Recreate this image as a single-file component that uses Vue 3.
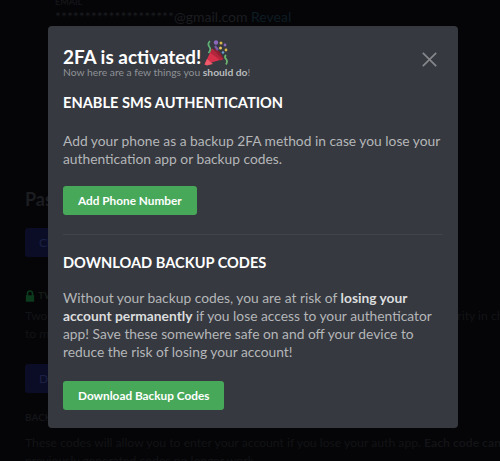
<script setup>
const sections = {
  sms: 'Add your phone as a backup 2FA method in case you lose your authentication app or backup codes.'
}
</script>

<template>
  <div class="page">
    <div class="backdrop">
      <div class="email-block">
        <div class="label">EMAIL</div>
        <div class="email"><span class="stars">********************</span>@gmail.com <span class="reveal">Reveal</span></div>
      </div>
      <h2 class="pw-title">Password and Authentication</h2>
      <div class="bg-btn first">Change Password</div>
      <div class="tfa"><svg class="lock" viewBox="0 0 12 14" width="10" height="12"><path d="M2 6V4a4 4 0 0 1 8 0v2h1v8H1V6zm2 0h4V4a2 2 0 0 0-4 0z" fill="#0c3a1d"/></svg>TWO-FACTOR AUTH ENABLED</div>
      <p class="bg-text tw">Two-factor authentication is enabled on your account, keeping your account security in check</p>
      <p class="bg-text">to make sure nobody else gets in.</p>
      <div class="bg-btn second">Download</div>
      <div class="backup">BACKUP CODES</div>
      <p class="bg-text codes">These codes will allow you to enter your account if you lose your auth app. <b>Each code can only</b></p>
      <p class="bg-text">previously generated codes no longer work.</p>
    </div>

    <div class="modal" role="dialog">
      <header class="head">
        <div>
          <div class="title"><span>2FA is activated!</span>
            <svg class="popper" viewBox="0 0 25 26" width="25" height="26">
              <path d="M0.5 24.5 L8 8.5 L19.5 19 Z" fill="#d7304a"/>
              <path d="M8 8.5 L19.5 19 L16.5 20.5 L6 12.5 Z" fill="#b2263c"/>
              <path d="M3 19 L9 24 L3 25.5 L0.5 24.5 Z" fill="#ef5a6c"/>
              <path d="M10 9 Q15 8 19.5 19 Q14 16 10 9 Z" fill="#8f1f33"/>
              <path d="M6 1 Q3 4 5.5 7 Q7.5 9.5 4.5 13" fill="none" stroke="#5fb377" stroke-width="1.7"/>
              <path d="M22 15 Q20 17 22 19 Q24 21 22 24.5" fill="none" stroke="#69b36e" stroke-width="1.8"/>
              <circle cx="12" cy="2.5" r="2.2" fill="#8c68bd"/>
              <path d="M11 6 L14 10" stroke="#7a59ad" stroke-width="2.2"/>
              <circle cx="17" cy="3" r="1.5" fill="#d9b54a"/>
              <circle cx="21" cy="5" r="1.4" fill="#8c68bd"/>
              <circle cx="16.5" cy="8" r="1.5" fill="#e2c25c"/>
              <circle cx="22" cy="10" r="1.4" fill="#d9b54a"/>
              <circle cx="19" cy="12.5" r="1.3" fill="#6f9bd1"/>
            </svg>
          </div>
          <div class="sub">Now here are a few things you <b>should do</b>!</div>
        </div>
        <svg class="close" viewBox="0 0 15 15" width="15" height="15"><path d="M0.8 0.8 L14.2 14.2 M14.2 0.8 L0.8 14.2" stroke="#85878c" stroke-width="1.7" fill="none"/></svg>
      </header>

      <section class="sec sms">
        <h3>ENABLE SMS AUTHENTICATION</h3>
        <p>{{ sections.sms }}</p>
        <button class="btn">Add Phone Number</button>
      </section>

      <div class="divider"></div>

      <section class="sec codes-sec">
        <h3>DOWNLOAD BACKUP CODES</h3>
        <p>Without your backup codes, you are at risk of <b>losing your account permanently</b> if you lose access to your authenticator app! Save these somewhere safe on and off your device to reduce the risk of losing your account!</p>
        <button class="btn">Download Backup Codes</button>
      </section>
    </div>
  </div>
</template>

<style scoped>
.page {
  position: relative;
  width: 500px;
  height: 461px;
  overflow: hidden;
  background: #050507;
  font-family: Lato, "Open Sans", sans-serif;
}
.backdrop {
  height: 100%;
  box-sizing: border-box;
  padding-left: 25px;
  color: #131417;
  font-size: 12px;
}
.email-block { padding-left: 30px; }
.label { height: 9px; font-size: 9px; line-height: 4px; font-weight: 700; overflow: hidden; }
.email { font-size: 14px; line-height: 16px; white-space: nowrap; color: #1b1d21; }
.reveal { color: #0d1c24; }
.pw-title { margin: 162px 0 0; height: 24px; font-size: 18px; line-height: 24px; white-space: nowrap; color: #1b1d20; }
.bg-btn {
  width: 70px;
  height: 29px;
  box-sizing: border-box;
  padding: 7px 14px;
  border-radius: 3px;
  background: #0b0d27;
  color: #1c2044;
  font-size: 12px;
  white-space: nowrap;
  overflow: hidden;
}
.first { margin-top: 17px; }
.tfa { margin-top: 32px; display: flex; align-items: center; gap: 3px; font-size: 10px; font-weight: 700; line-height: 13px; white-space: nowrap; color: #141c16; }
.bg-text { margin: 0; font-size: 12.2px; line-height: 18px; white-space: nowrap; color: #121316; }
.bg-text b { font-weight: 700; }
.tw { margin-top: 5px; }
.second { margin-top: 21px; }
.backup { margin-top: 18px; font-size: 10px; font-weight: 700; line-height: 13px; }
.codes { margin-top: 10px; }

.modal {
  position: absolute;
  left: 48px;
  top: 26px;
  width: 410px;
  height: 402px;
  box-sizing: border-box;
  padding: 20px 15px 15px;
  border-radius: 4px;
  background: #36393f;
  color: #b9bbbe;
}
.head { display: flex; justify-content: space-between; align-items: flex-start; }
.title {
  display: flex;
  align-items: center;
  gap: 3px;
  height: 20px;
  color: #fff;
  font-size: 18.9px;
  font-weight: 700;
  white-space: pre;
}
.popper { margin-top: -6px; }
.sub { font-size: 10.3px; line-height: 12px; color: #8e9297; margin-top: 0; }
.sub b { color: #b9bbbe; font-weight: 700; }
.close { margin: 6px 6px 0 0; }
.sec h3 {
  margin: 0;
  color: #fff;
  font-size: 14.6px;
  line-height: 18px;
  font-weight: 700;
  white-space: nowrap;
}
.sms { margin-top: 16px; }
.sec p {
  margin: 20px 0 0;
  font-size: 13.8px;
  line-height: 18.3px;
  color: #b4b6b9;
}
.sec p b { color: #dcddde; font-weight: 700; }
.btn {
  display: block;
  margin-top: 17px;
  height: 29px;
  padding: 0 15px;
  border: 0;
  border-radius: 3px;
  background: #47a85a;
  color: #fff;
  font-family: inherit;
  font-size: 11.8px;
  font-weight: 700;
}
.codes-sec p { margin-top: 17px; }
.codes-sec .btn { margin-top: 19px; }
.divider { height: 1px; margin: 19px 0 19px; background: #40444b; }
</style>
